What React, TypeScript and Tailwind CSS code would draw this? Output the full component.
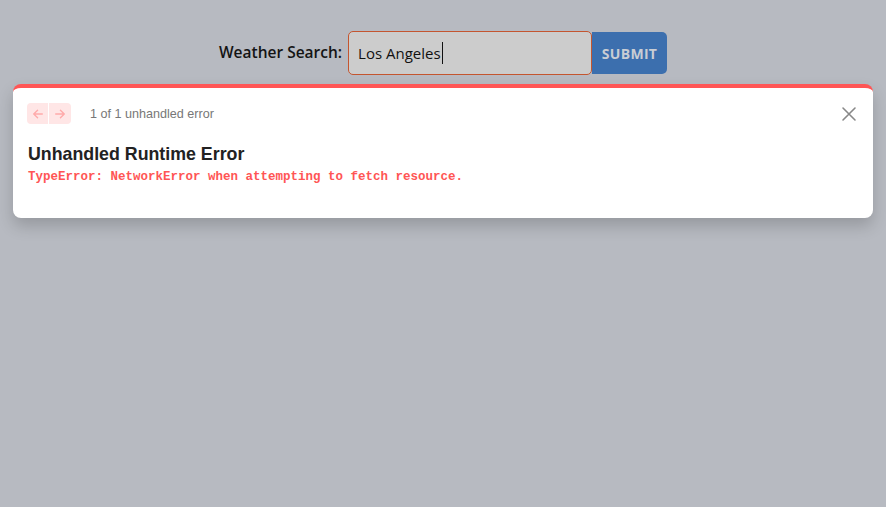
import React from "react";

export default function App() {
  return (
    <div className="relative w-[886px] h-[507px] bg-[#b7bac1] overflow-hidden" style={{ fontFamily: "'Liberation Sans', Arial, sans-serif" }}>
      <div className="flex items-center justify-center pt-[31px]" style={{ fontFamily: "'Open Sans', 'Noto Sans', sans-serif" }}>
        <label className="text-[15.5px] font-semibold text-[#141414] mr-[6px]">Weather Search:</label>
        <div className="flex items-center">
          <div className="w-[244px] h-[44px] bg-[#cccccc] border border-[#c4552f] rounded-[5px] flex items-center pl-[9px] text-[15px] text-[#111]">
            Los Angeles<span className="w-px h-[22px] bg-[#111] ml-[1px]" />
          </div>
          <button className="w-[75px] h-[42px] bg-[#3c6fae] text-[#c9cdd4] text-[14px] font-bold rounded-r-[5px] tracking-[0.3px]">SUBMIT</button>
        </div>
      </div>

      <div className="absolute left-[13px] top-[84px] w-[860px] h-[134px] bg-white rounded-[8px] border-t-[4px] border-[#ff5555] shadow-[0_8px_16px_rgba(0,0,0,0.18)]">
        <div className="flex items-center pl-[14px] pr-[16px] pt-[15px]">
          <div className="flex h-[21px] rounded-[4px] bg-[#ffe6e6] overflow-hidden">
            <div className="w-[21px] flex items-center justify-center">
              <svg width="12" height="12" viewBox="0 0 14 14" fill="none" stroke="#ffaaaa" strokeWidth="1.6" strokeLinecap="round" strokeLinejoin="round"><path d="M12 7H2M6.5 2.5L2 7l4.5 4.5" /></svg>
            </div>
            <div className="w-px bg-white" />
            <div className="w-[22px] flex items-center justify-center">
              <svg width="12" height="12" viewBox="0 0 14 14" fill="none" stroke="#ffaaaa" strokeWidth="1.6" strokeLinecap="round" strokeLinejoin="round"><path d="M2 7h10M7.5 2.5L12 7l-4.5 4.5" /></svg>
            </div>
          </div>
          <span className="ml-[19px] text-[12.6px] text-[#777] mt-[1px]">1 of 1 unhandled error</span>
          <div className="ml-auto">
            <svg width="16" height="16" viewBox="0 0 16 16" fill="none" stroke="#888" strokeWidth="1.6" strokeLinecap="round"><path d="M2 2l12 12M14 2L2 14" /></svg>
          </div>
        </div>
        <div className="pl-[15px] pt-[19px]">
          <h1 className="text-[17.8px] leading-[22px] font-bold text-[#222]">Unhandled Runtime Error</h1>
          <div className="text-[12.5px] font-bold text-[#ff5555] mt-[3px]" style={{ fontFamily: "'Liberation Mono', 'Courier New', monospace" }}>
            TypeError: NetworkError when attempting to fetch resource.
          </div>
        </div>
      </div>
    </div>
  );
}
